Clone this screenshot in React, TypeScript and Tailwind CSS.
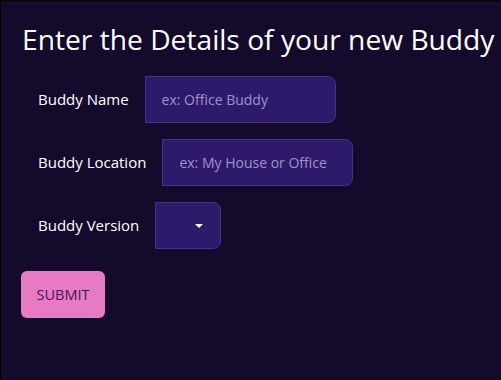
import React from 'react';

const Field: React.FC<{ label: string; placeholder: string }> = ({ label, placeholder }) => (
  <div className="flex items-center gap-4 pl-[37px]">
    <label className="text-[15px] font-medium text-white">{label}</label>
    <input
      type="text"
      placeholder={placeholder}
      className="w-[191px] h-[47px] bg-[#2e1a6b] border border-[#45338a] rounded-r-lg px-4 text-[14px] text-white outline-none placeholder-[#9f93c4]"
    />
  </div>
);

export default function App() {
  return (
    <div
      className="w-[501px] h-[380px] bg-[#140a2b] border-t border-l border-black overflow-hidden"
      style={{ fontFamily: '"Open Sans", "Noto Sans", sans-serif' }}
    >
      <h1 className="pl-[21px] pt-[19px] text-[28.2px] leading-[38px] text-white">
        Enter the Details of your new Buddy
      </h1>

      <div className="mt-[18px] flex flex-col gap-4">
        <Field label="Buddy Name" placeholder="ex: Office Buddy" />
        <Field label="Buddy Location" placeholder="ex: My House or Office" />

        <div className="flex items-center gap-4 pl-[37px]">
          <label className="text-[15px] font-medium text-white">Buddy Version</label>
          <div className="w-[66px] h-[47px] bg-[#2e1a6b] border border-[#45338a] rounded-r-lg flex items-center justify-end pr-[17px]">
            <svg width="8" height="4" viewBox="0 0 8 4">
              <path d="M0 0 L8 0 L4 4 Z" fill="#ffffff" />
            </svg>
          </div>
        </div>
      </div>

      <button className="ml-[20px] mt-[22px] w-[84px] h-[47px] bg-[#e87ac4] rounded-md text-[14.5px] font-medium text-[#3a1660]">
        SUBMIT
      </button>
    </div>
  );
}
